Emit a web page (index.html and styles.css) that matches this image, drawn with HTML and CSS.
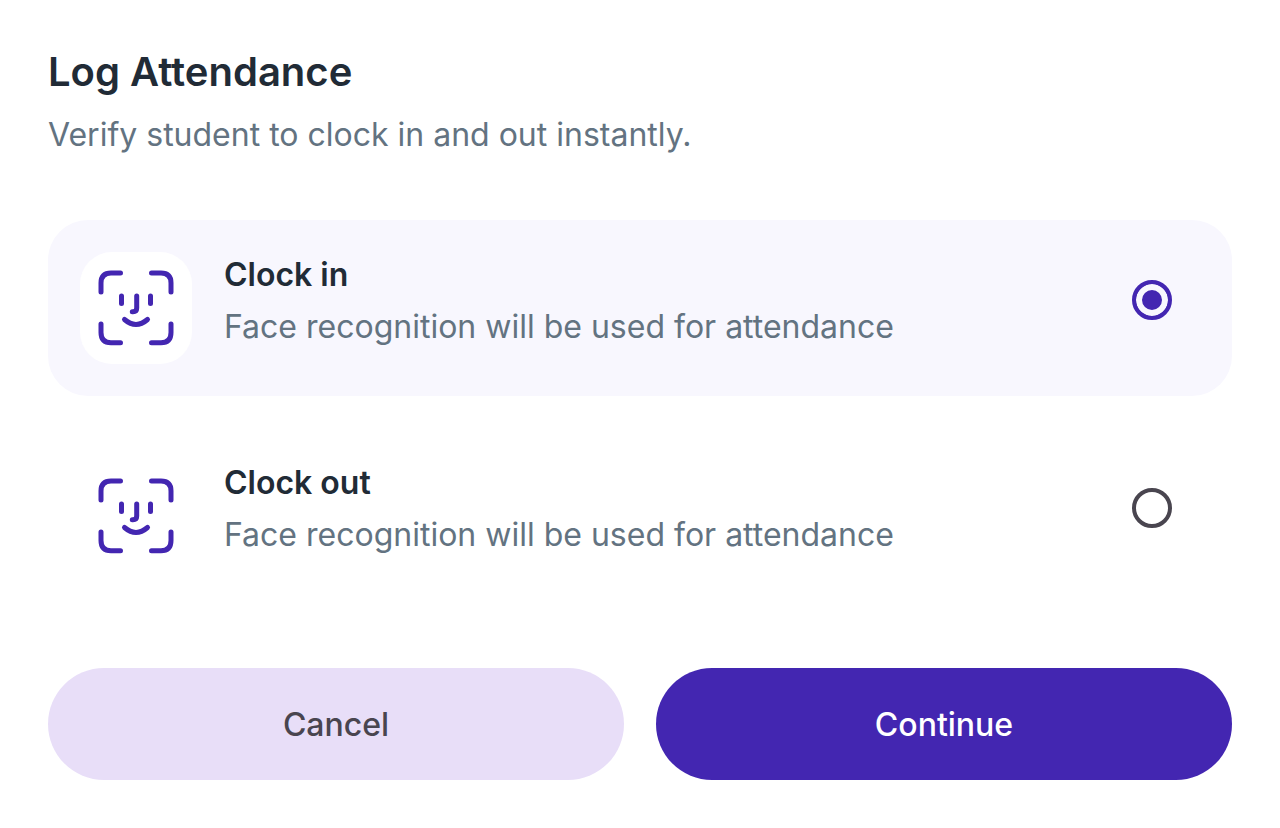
FILE: index.html
```html
<!DOCTYPE html>
<html lang="en">
  <head>
    <meta charset="UTF-8" />
    <meta name="viewport" content="width=device-width, initial-scale=1.0" />
    <title>Log Attendance</title>
    <link rel="stylesheet" href="styles.css">
  </head>
  <body>
    <form class="attendance">
      <h1>Log Attendance</h1>
      <p class="subtitle">Verify student to clock in and out instantly.</p>

      <div class="options">
        <label class="option" for="clock-in">
          <span class="icon">
            <svg viewBox="0 0 80 80" aria-hidden="true">
              <path d="M5 24V15Q5 5 15 5H24.500M55.500 5H65Q75 5 75 15V24M75 56V64.500Q75 74.800 65 74.800H55.500M24.500 74.800H15Q5 74.800 5 64.500V56" />
              <path d="M25.500 28V35.500M54.500 28V35.500M40.700 28V40Q40.700 43.700 37 43.700H36.300" />
              <path d="M28.500 51.500Q40 61.500 51.500 51.500" />
            </svg>
          </span>
          <span class="text">
            <span class="name">Clock in</span>
            <span class="desc">Face recognition will be used for attendance</span>
          </span>
          <input type="radio" id="clock-in" name="action" value="in" checked />
        </label>
        <label class="option" for="clock-out">
          <span class="icon">
            <svg viewBox="0 0 80 80" aria-hidden="true">
              <path d="M5 24V15Q5 5 15 5H24.500M55.500 5H65Q75 5 75 15V24M75 56V64.500Q75 74.800 65 74.800H55.500M24.500 74.800H15Q5 74.800 5 64.500V56" />
              <path d="M25.500 28V35.500M54.500 28V35.500M40.700 28V40Q40.700 43.700 37 43.700H36.300" />
              <path d="M28.500 51.500Q40 61.500 51.500 51.500" />
            </svg>
          </span>
          <span class="text">
            <span class="name">Clock out</span>
            <span class="desc">Face recognition will be used for attendance</span>
          </span>
          <input type="radio" id="clock-out" name="action" value="out" />
        </label>
      </div>

      <div class="buttons">
        <button type="button" class="cancel">Cancel</button>
        <button type="submit" class="continue">Continue</button>
      </div>
    </form>
  </body>
</html>
```
FILE: styles.css
```css
* {
  margin: 0;
  padding: 0;
  box-sizing: border-box;
}
body {
  font-family: Inter, sans-serif;
  background-color: white;
  color: #212b36;
}
.attendance {
  padding: 48px;
}
h1 {
  font-size: 40px;
  line-height: 48px;
  font-weight: 600;
}
.subtitle {
  margin-top: 16px;
  font-size: 32px;
  line-height: 46px;
  color: #637381;
}
.options {
  margin-top: 62px;
  display: grid;
  gap: 32px;
}
.option {
  display: flex;
  align-items: flex-start;
  gap: 32px;
  padding: 32px;
  border-radius: 40px;
  cursor: pointer;
}
.option:has(input:checked) {
  background-color: #f8f7fe;
}
.icon {
  display: flex;
  padding: 16px;
  border-radius: 32px;
  background-color: white;
}
.icon svg {
  width: 80px;
  height: 80px;
  fill: none;
  stroke: #4326b1;
  stroke-width: 5;
  stroke-linecap: round;
  stroke-linejoin: round;
}
.text {
  flex: 1;
  display: grid;
  gap: 6px;
  font-size: 32px;
  line-height: 46px;
}
.name {
  font-weight: 600;
}
.desc {
  color: #637381;
}
.option input {
  appearance: none;
  width: 40px;
  height: 40px;
  margin: 28px;
  border: 4px solid #49454f;
  border-radius: 50%;
}
.option input:checked {
  border-color: #4326b1;
  background-color: #4326b1;
  box-shadow: inset 0 0 0 6px #f8f7fe;
}
.buttons {
  margin-top: 64px;
  display: grid;
  grid-template-columns: 1fr 1fr;
  gap: 32px;
}
.buttons button {
  height: 112px;
  border: none;
  border-radius: 56px;
  font-family: inherit;
  font-size: 32px;
  font-weight: 500;
  cursor: pointer;
}
.cancel {
  background-color: #e8def8;
  color: #49454f;
}
.continue {
  background-color: #4326b1;
  color: white;
}
```
